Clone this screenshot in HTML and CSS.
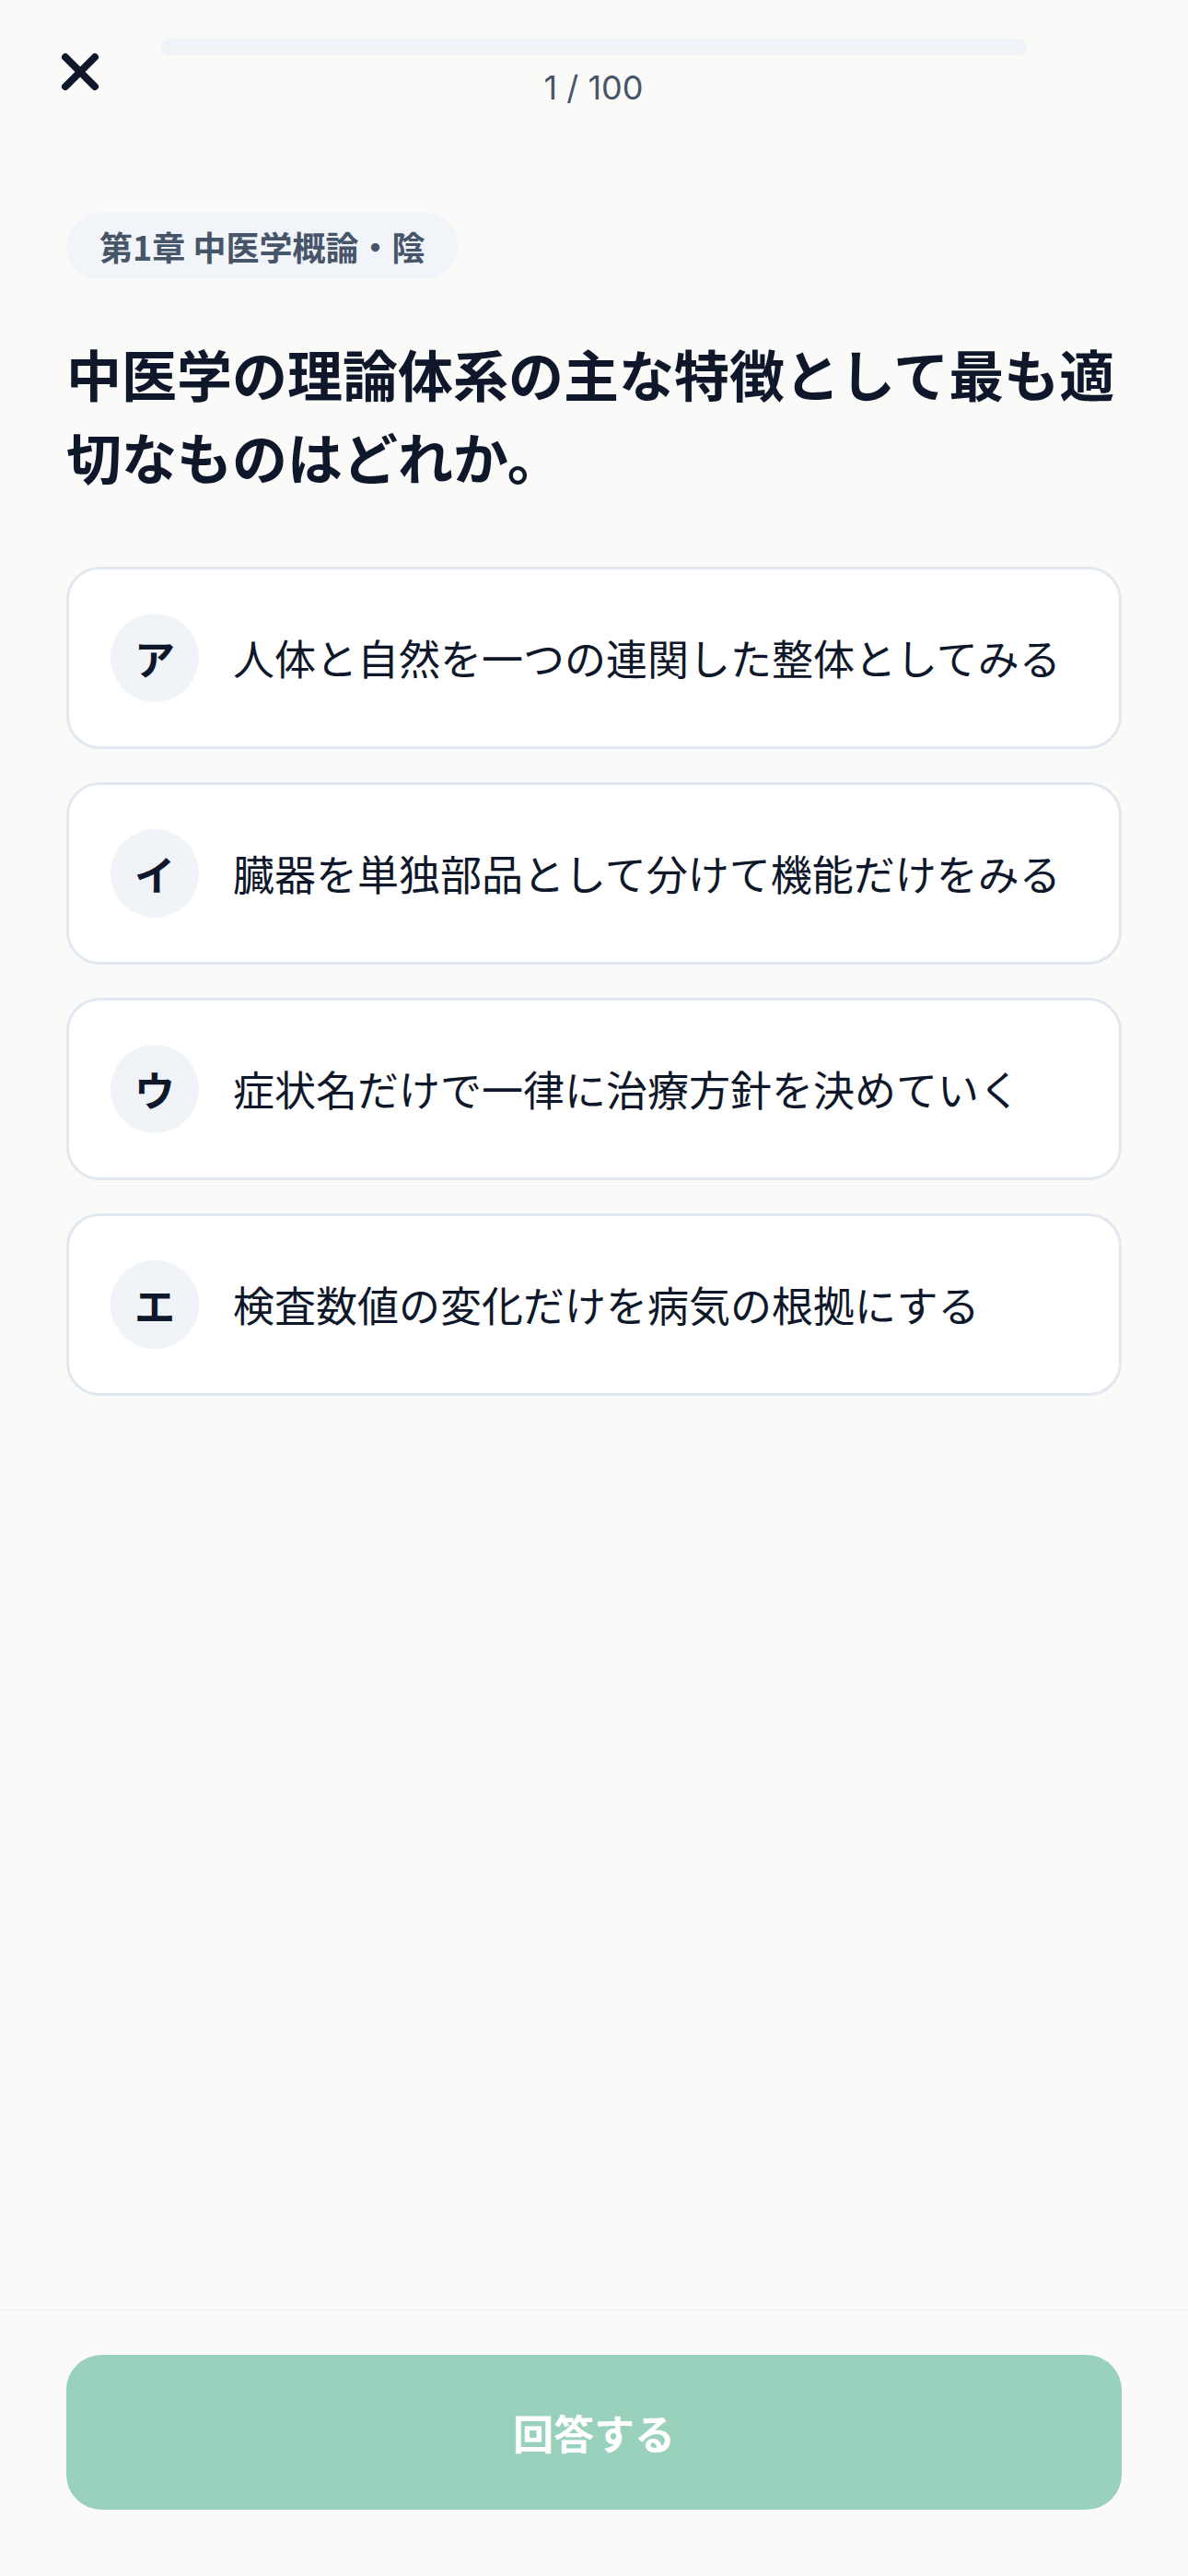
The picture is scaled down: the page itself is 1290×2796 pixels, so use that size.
FILE: index.html
```html
<!DOCTYPE html>
<html lang="ja">
<head>
<meta charset="utf-8">
<title>Quiz</title>
<link rel="stylesheet" href="styles.css">
</head>
<body>
<div class="screen">
  <header class="header">
    <div class="header-left">
      <button class="close" aria-label="閉じる">
        <svg viewBox="0 0 42 42" width="42" height="42">
          <path d="M5 5 L37 37 M37 5 L5 37" stroke="#0f172a" stroke-width="8" stroke-linecap="round" fill="none"/>
        </svg>
      </button>
    </div>
    <div class="progress">
      <div class="bar"><div class="bar-fill" style="width:0%"></div></div>
      <div class="count">1 / 100</div>
    </div>
    <div class="header-right"></div>
  </header>

  <main class="content">
    <div class="chip">第1章 中医学概論・陰</div>
    <h1 class="question">中医学の理論体系の主な特徴として最も適切なものはどれか。</h1>
    <ul class="options">
      <li class="option"><span class="mark">ア</span><span class="label">人体と自然を一つの連関した整体としてみる</span></li>
      <li class="option"><span class="mark">イ</span><span class="label">臓器を単独部品として分けて機能だけをみる</span></li>
      <li class="option"><span class="mark">ウ</span><span class="label">症状名だけで一律に治療方針を決めていく</span></li>
      <li class="option"><span class="mark">エ</span><span class="label">検査数値の変化だけを病気の根拠にする</span></li>
    </ul>
  </main>

  <footer class="footer">
    <button class="submit" disabled>回答する</button>
  </footer>
</div>
</body>
</html>
```

FILE: styles.css
```css
* {
  box-sizing: border-box;
}

html, body {
  margin: 0;
  padding: 0;
}

body {
  background: #fafaf9;
  font-family: "Noto Sans CJK JP", "Noto Sans", sans-serif;
  color: #0f172a;
}

.screen {
  min-height: 2796px;
  display: flex;
  flex-direction: column;
}

/* Header */
.header {
  display: grid;
  grid-template-columns: 174px 1fr 175px;
  padding-top: 42px;
}

.header-left {
  display: flex;
  align-items: flex-start;
}

.close {
  margin: 15px 0 0 66px;
  width: 42px;
  height: 42px;
  padding: 0;
  border: 0;
  background: none;
  display: flex;
}

.progress {
  display: flex;
  flex-direction: column;
  align-items: center;
}

.bar {
  width: 100%;
  height: 18px;
  border-radius: 9px;
  background: #f0f3f8;
  overflow: hidden;
}

.bar-fill {
  height: 100%;
  background: #34a57f;
}

.count {
  margin-top: 14px;
  font-family: Inter, "Noto Sans", sans-serif;
  font-size: 36px;
  line-height: 42px;
  color: #475569;
}

/* Content */
.content {
  flex: 1;
  padding: 115px 72px 0;
}

.chip {
  display: inline-flex;
  align-items: center;
  height: 72px;
  padding: 0 36px;
  border-radius: 36px;
  background: #f1f4f9;
  color: #475569;
  font-size: 36px;
  font-weight: 700;
}

.question {
  margin: 57px 0 0;
  font-size: 60px;
  line-height: 90px;
  font-weight: 700;
  color: #0f172a;
}

.options {
  list-style: none;
  margin: 75px 0 0;
  padding: 0;
  display: flex;
  flex-direction: column;
  gap: 36px;
}

.option {
  display: flex;
  align-items: center;
  gap: 37px;
  padding: 48px 45px;
  background: #ffffff;
  border: 3px solid #e2e8f0;
  border-radius: 36px;
}

.mark {
  flex: none;
  width: 96px;
  height: 96px;
  border-radius: 50%;
  background: #f0f3f8;
  display: flex;
  align-items: center;
  justify-content: center;
  font-size: 44px;
  font-weight: 700;
  color: #0f172a;
}

.label {
  font-size: 45px;
  line-height: 60px;
  color: #0f172a;
}

/* Footer */
.footer {
  border-top: 2px solid #f1f4f8;
  padding: 48px 72px 72px;
}

.submit {
  width: 100%;
  height: 168px;
  border: 0;
  border-radius: 38px;
  background: #99d1bd;
  color: #ffffff;
  font-family: "Noto Sans CJK JP", "Noto Sans", sans-serif;
  font-size: 44px;
  font-weight: 700;
}
```
